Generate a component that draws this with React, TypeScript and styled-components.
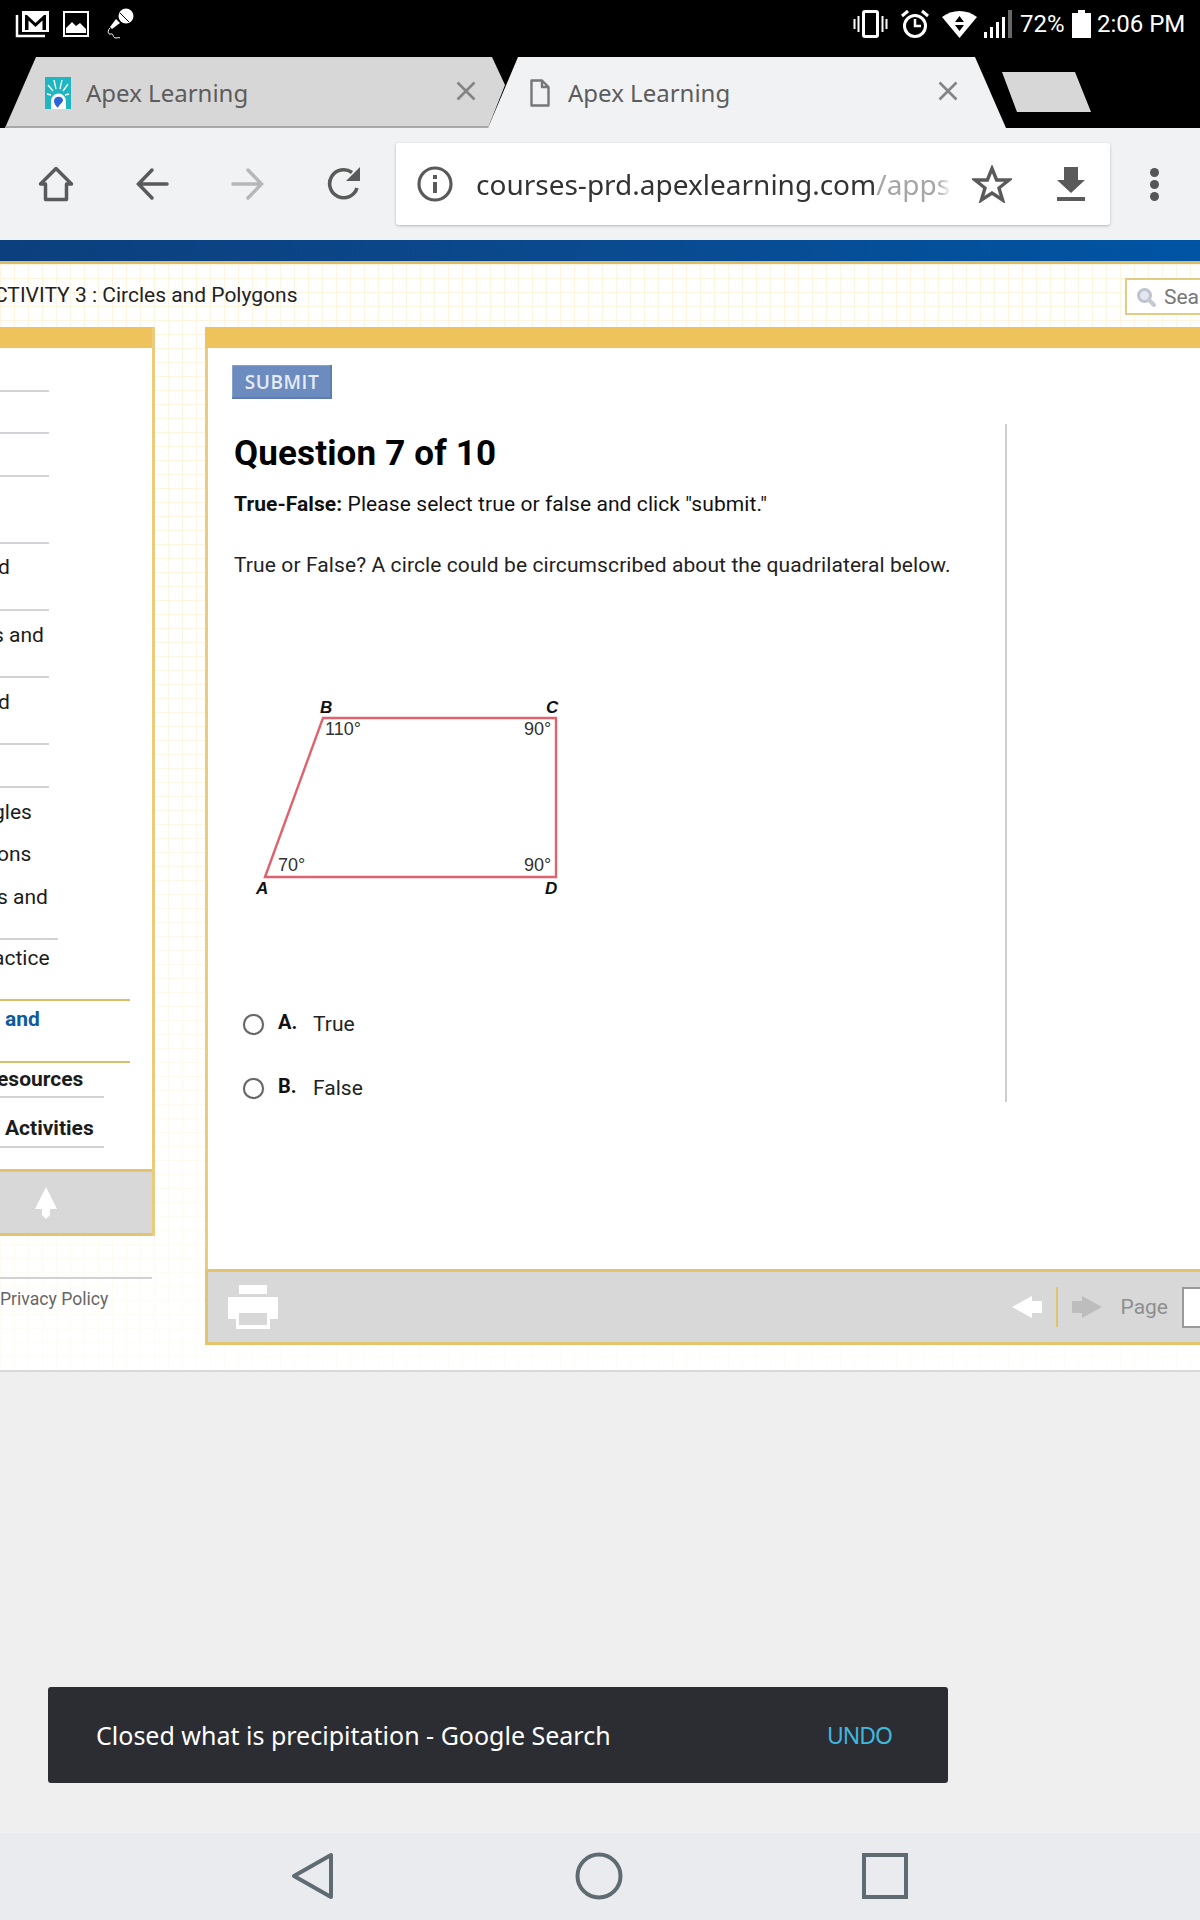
import React from 'react';
import styled, { createGlobalStyle } from 'styled-components';

const GlobalStyle = createGlobalStyle`
  html, body {
    margin: 0;
    padding: 0;
    width: 1200px;
    height: 1920px;
    overflow: hidden;
    background: #efefef;
  }
  * { box-sizing: border-box; }
`;

const Screen = styled.div`
  width: 1200px;
  height: 1920px;
  display: flex;
  flex-direction: column;
  overflow: hidden;
  font-family: Roboto, "Liberation Sans", sans-serif;
  color: #111;
`;

/* ---- phone status bar ---- */
const StatusBar = styled.div`
  height: 57px;
  background: #000;
  display: flex;
  align-items: center;
  padding: 0 13px 10px 15px;
  flex: none;
`;

const StatusLeft = styled.div`
  display: flex;
  align-items: center;
  gap: 13px;
`;

const StatusRight = styled.div`
  margin-left: auto;
  display: flex;
  align-items: center;
  gap: 8px;
  color: #fff;
`;

const StatusIcon = styled.svg<{ $ml?: number; $mr?: number }>`
  flex: none;
  margin-left: ${p => p.$ml ?? 0}px;
  margin-right: ${p => p.$mr ?? 0}px;
`;

const StatusText = styled.span<{ $w: number }>`
  width: ${p => p.$w}px;
  font-family: "Liberation Sans Narrow", Roboto, sans-serif;
  font-size: 24px;
  white-space: nowrap;
  line-height: 28px;
`;

/* ---- browser tabs ---- */
const TabStrip = styled.div`
  height: 71px;
  background: #000;
  display: flex;
  padding-left: 5px;
  flex: none;
`;

const Tab = styled.div<{ $active?: boolean }>`
  position: relative;
  height: 71px;
  width: ${p => (p.$active ? 518 : 500)}px;
  margin-left: ${p => (p.$active ? -17 : 0)}px;
  background: ${p => (p.$active ? '#f1f2f3' : '#d7d7d7')};
  clip-path: ${p =>
    p.$active
      ? 'polygon(30px 0, 487px 0, 518px 71px, 0 71px)'
      : 'polygon(31px 0, 487px 0, 500px 28px, 483px 71px, 0 71px)'};
  display: flex;
  align-items: center;
  padding: 0 ${p => (p.$active ? 48 : 29)}px 0 ${p => (p.$active ? 42 : 40)}px;
  ${p => (p.$active ? '' : 'box-shadow: inset 0 -2px 0 #a9a9a9;')}
`;

const TabIcon = styled.svg`
  flex: none;
`;

const TabTitle = styled.span<{ $active?: boolean }>`
  font-family: "Noto Sans", sans-serif;
  font-size: 24px;
  color: #5c5c5c;
  margin-left: ${p => (p.$active ? 18 : 15)}px;
  white-space: nowrap;
`;

const TabClose = styled.svg`
  margin: -4px 0 0 auto;
  flex: none;
`;

const NewTab = styled.div`
  width: 89px;
  height: 40px;
  margin: 15px 0 0 -4px;
  background: #d7d7d7;
  clip-path: polygon(0 0, 73px 0, 89px 40px, 15px 40px);
`;

/* ---- browser toolbar ---- */
const Toolbar = styled.div`
  height: 112px;
  background: #f1f2f3;
  display: flex;
  align-items: center;
  padding-left: 8px;
  flex: none;
`;

const ToolCell = styled.div`
  width: 96px;
  height: 48px;
  display: flex;
  align-items: center;
  justify-content: center;
  flex: none;
`;

const AddressBar = styled.div`
  width: 714px;
  height: 82px;
  margin-left: 4px;
  background: #fff;
  border-radius: 3px;
  box-shadow: 0 1px 3px rgba(0, 0, 0, 0.25);
  display: flex;
  align-items: center;
  padding-left: 21px;
  flex: none;
`;

const UrlText = styled.div`
  width: 476px;
  margin-left: 23px;
  overflow: hidden;
  white-space: nowrap;
  font-family: "Noto Sans", sans-serif;
  font-size: 28px;
  color: #333;
  -webkit-mask-image: linear-gradient(90deg, #000 97%, transparent 100%);
`;

const UrlPath = styled.span`
  color: #a6a6a6;
`;

const AddressIcon = styled.svg<{ $ml?: number }>`
  margin-left: ${p => p.$ml ?? 0}px;
  flex: none;
`;

const MenuDots = styled.div`
  width: 88px;
  display: flex;
  flex-direction: column;
  align-items: center;
  gap: 3px;
  flex: none;
`;

const Dot = styled.span`
  width: 9px;
  height: 9px;
  border-radius: 50%;
  background: #565656;
`;

/* ---- page ---- */
const BlueBand = styled.div`
  height: 24px;
  flex: none;
  background: linear-gradient(90deg, #0c3f7d 0%, #0a4a8f 50%, #0054a4 100%);
  border-bottom: 3px solid #dcbc62;
`;

const PageArea = styled.div`
  height: 1108px;
  flex: none;
  border-bottom: 2px solid #d9d9d9;
  background-color: #fff;
  background-image:
    linear-gradient(rgba(255, 255, 255, 0) 30%, rgba(255, 255, 255, 0.75) 100%),
    linear-gradient(#fdf5e0 1px, transparent 1px),
    linear-gradient(90deg, #fdf5e0 1px, transparent 1px);
  background-size: 100% 100%, 14px 14px, 14px 14px;
`;

const TopStrip = styled.div`
  height: 63px;
  display: flex;
  align-items: flex-start;
`;

const ActivityTitle = styled.div`
  font-size: 21px;
  line-height: 24px;
  margin: 19px 0 0 -6px;
  color: #222;
  white-space: nowrap;
`;

const SearchBox = styled.div`
  margin: 14px 0 0 auto;
  width: 75px;
  height: 37px;
  flex: none;
  background: #fff;
  border: 2px solid #e3cb85;
  border-right: 0;
  display: flex;
  align-items: center;
  padding-left: 9px;
  gap: 8px;
  font-size: 21px;
  color: #777;
`;

const SearchIcon = styled.svg`
  flex: none;
`;

const Panels = styled.div`
  display: flex;
  gap: 50px;
  align-items: flex-start;
`;

const LeftColumn = styled.div`
  width: 155px;
  flex: none;
`;

const SidePanel = styled.div`
  height: 909px;
  background: #fff;
  border-right: 3px solid #eccb7c;
  display: flex;
  flex-direction: column;
  overflow: hidden;
`;

const PanelHeader = styled.div`
  height: 21px;
  flex: none;
  background: #efc35b;
`;

const NavRow = styled.div<{ $h: number; $pad: number; $indent?: number }>`
  height: ${p => p.$h}px;
  padding-top: ${p => p.$pad}px;
  margin-left: ${p => p.$indent ?? 0}px;
  display: flex;
  flex-direction: column;
  flex: none;
`;

const NavText = styled.div<{ $kind?: 'bold' | 'current'; $lead?: number }>`
  font-size: 21px;
  line-height: 24px;
  padding-left: ${p => p.$lead ?? 0}px;
  white-space: nowrap;
  font-weight: ${p => (p.$kind ? 700 : 400)};
  color: ${p => (p.$kind === 'current' ? '#0f5a9c' : '#1c1c1c')};
`;

const NavRule = styled.div<{ $w: number; $gold?: boolean }>`
  width: ${p => p.$w}px;
  height: 2px;
  margin-top: auto;
  background: ${p => (p.$gold ? '#dfbd68' : '#d2d3d6')};
`;

const SideFooter = styled.div`
  margin-top: auto;
  height: 67px;
  flex: none;
  background: #d8d8d8;
  border-top: 3px solid #e3c36c;
  border-bottom: 3px solid #e3c36c;
  display: flex;
  align-items: center;
  padding-left: 35px;
`;

const FooterLinks = styled.div`
  margin-top: 41px;
  border-top: 2px solid #d2d2d2;
  width: 152px;
  padding-top: 8px;
  font-size: 17.6px;
  line-height: 24px;
  color: #666;
  white-space: nowrap;
`;

const MainPanel = styled.div`
  width: 1100px;
  flex: none;
  background: #fff;
  border-left: 3px solid #eccb7c;
`;

const MainHeader = styled(PanelHeader)`
  margin-left: -3px;
`;

const MainBody = styled.div`
  height: 921px;
  padding: 17px 0 0 24px;
`;

const SubmitButton = styled.div`
  width: 100px;
  height: 34px;
  background: #6c8bbf;
  box-shadow: inset -2px -2px 0 #5d7db3, inset 1px 1px 0 #88a2cc;
  color: #e6ecf6;
  font-family: "Open Sans", sans-serif;
  font-size: 19px;
  font-weight: 600;
  letter-spacing: 0.6px;
  display: flex;
  align-items: center;
  justify-content: center;
`;

const QuestionColumn = styled.div`
  width: 775px;
  height: 678px;
  margin-top: 25px;
  padding-left: 2px;
  border-right: 2px solid #cfcfcf;
`;

const Heading = styled.h1`
  margin: 2px 0 0;
  font-size: 35px;
  letter-spacing: 0.15px;
  line-height: 60px;
  font-weight: 700;
  color: #000;
`;

const Instruction = styled.p`
  margin: 5px 0 0;
  font-size: 21px;
  letter-spacing: 0.08px;
  line-height: 30px;
  color: #111;
`;

const Prompt = styled.p`
  margin: 31px 0 0;
  font-size: 21px;
  letter-spacing: 0.1px;
  line-height: 30px;
  color: #222;
`;

const Figure = styled.svg`
  display: block;
  margin: 110px 0 0 16px;
`;

const Options = styled.div`
  margin-top: 94px;
  display: flex;
  flex-direction: column;
  gap: 24px;
`;

const OptionRow = styled.div`
  height: 40px;
  display: flex;
  align-items: center;
  padding-left: 9px;
`;

const Radio = styled.span`
  width: 21px;
  height: 21px;
  border-radius: 50%;
  border: 2px solid #666;
  background: #fff;
  box-shadow: 0 0 1px #999;
  flex: none;
`;

const OptionKey = styled.span`
  width: 35px;
  margin-left: 14px;
  font-size: 20px;
  font-weight: 700;
  color: #111;
  margin-top: -4px;
`;

const OptionText = styled.span`
  font-size: 21px;
  color: #222;
`;

const MainFooter = styled.div`
  height: 76px;
  margin-left: -3px;
  background: #d8d8d8;
  border-top: 3px solid #e3c36c;
  border-bottom: 3px solid #e3c36c;
  border-left: 3px solid #e3c36c;
  display: flex;
  align-items: center;
  padding-left: 20px;
`;

const Pager = styled.div`
  margin-left: auto;
  display: flex;
  align-items: center;
`;

const PagerDivider = styled.span`
  width: 2px;
  height: 40px;
  margin: 0 14px;
  background: #e3c36c;
`;

const PagerLabel = styled.span`
  margin: 0 14px 0 19px;
  font-size: 21px;
  color: #8f8f8f;
`;

const PageInput = styled.div`
  width: 123px;
  height: 41px;
  background: #fff;
  border: 2px solid #999;
`;

/* ---- lower area of the browser ---- */
const LowerArea = styled.div`
  flex: 1;
  background: #efefef;
  padding: 315px 0 0 48px;
`;

const Snackbar = styled.div`
  width: 900px;
  height: 96px;
  background: #2b2d33;
  border-radius: 3px;
  display: flex;
  align-items: center;
  padding: 0 56px 0 48px;
  font-family: "Noto Sans", sans-serif;
  font-size: 25px;
  color: #fff;
`;

const SnackbarText = styled.span`
  white-space: nowrap;
`;

const UndoLabel = styled.span`
  margin-left: auto;
  font-size: 23px;
  letter-spacing: -1px;
  color: #3fb8de;
`;

const NavBar = styled.div`
  height: 87px;
  flex: none;
  background: #e9ebee;
  display: grid;
  grid-template-columns: repeat(3, 286px);
  padding: 0 0 2px 170px;
  align-items: center;
  justify-items: center;
`;

const App: React.FC = () => {
  const rows: Array<{
    h: number;
    pad: number;
    text?: string;
    kind?: 'bold' | 'current';
    rule?: number;
    gold?: boolean;
    indent?: number;
    lead?: number;
  }> = [
    { h: 44, pad: 0, rule: 49 },
    { h: 42, pad: 0, rule: 49 },
    { h: 43, pad: 0, rule: 49 },
    { h: 67, pad: 0, rule: 49 },
    { h: 67, pad: 11, text: 'd', rule: 49, indent: -2 },
    { h: 67, pad: 12, text: 's and', rule: 49, indent: -7 },
    { h: 67, pad: 12, text: 'd', rule: 49, indent: -2 },
    { h: 43, pad: 0, rule: 49 },
    { h: 42, pad: 12, text: 'gles', indent: -7 },
    { h: 42, pad: 12, text: 'ons', indent: -3 },
    { h: 68, pad: 13, text: 's and', rule: 58, indent: -3 },
    { h: 61, pad: 6, text: 'actice', rule: 130, gold: true, indent: -7 },
    { h: 62, pad: 6, text: 'and', kind: 'current', rule: 130, gold: true, lead: 5 },
    { h: 35, pad: 4, text: 'esources', kind: 'bold', rule: 104, indent: -3 },
    { h: 50, pad: 18, text: 'Activities', kind: 'bold', rule: 104, lead: 5 },
  ];

  return (
    <Screen>
      <GlobalStyle />

      <StatusBar>
        <StatusLeft>
          <svg width="35" height="28" viewBox="0 0 35 28">
            <path d="M2 5V26H30" fill="none" stroke="#fff" strokeWidth="2.5" />
            <rect x="7" y="1" width="27" height="21" fill="#fff" />
            <path d="M10 20V5H12L20.5 13L29 5H31V20H27.5V10.5L20.5 17L13.5 10.5V20Z" fill="#000" />
          </svg>
          <svg width="26" height="26" viewBox="0 0 26 26">
            <rect x="1" y="1" width="24" height="24" fill="none" stroke="#fff" strokeWidth="2" />
            <path d="M3 22V17L9 11L13 15L17 12L23 18V22Z" fill="#fff" />
          </svg>
          <StatusIcon $ml={5} width="28" height="32" viewBox="0 0 28 32">
            <path d="M13 15L9 11L3 19L5 21Z" fill="#fff" />
            <circle cx="19" cy="8" r="7.5" fill="#fff" />
            <path d="M13 5L22 14" stroke="#000" strokeWidth="1" />
            <path d="M3 20C0 23 1 27 4 26C7 25 5 30 9 30C11 30 11 29 13 30" fill="none" stroke="#fff" strokeWidth="1" />
          </StatusIcon>
        </StatusLeft>
        <StatusRight>
          <StatusIcon width="35" height="28" viewBox="0 0 35 28">
            <rect x="10.5" y="1.5" width="14" height="25" rx="1.5" fill="none" stroke="#fff" strokeWidth="3" />
            <path d="M1.5 9V19M5.5 6V22M29.5 6V22M33.5 9V19" stroke="#fff" strokeWidth="2" />
          </StatusIcon>
          <StatusIcon $ml={4} width="30" height="30" viewBox="0 0 30 30">
            <circle cx="15" cy="17" r="10.5" fill="none" stroke="#fff" strokeWidth="3" />
            <path d="M15 10V17H21" fill="none" stroke="#fff" strokeWidth="2.5" />
            <path d="M2 7L8 2M28 7L22 2" stroke="#fff" strokeWidth="3" />
          </StatusIcon>
          <StatusIcon $ml={4} width="35" height="28" viewBox="0 0 35 28">
            <path d="M0 7C10 -1 25 -1 35 7L17.5 28Z" fill="#fff" />
            <path d="M17.5 6L13 12H22ZM17.5 21L13 15H22Z" fill="#000" />
          </StatusIcon>
          <StatusIcon $ml={-1} width="28" height="28" viewBox="0 0 28 28">
            <path d="M0 22h3v6H0zM6 17h3v11H6zM12 12h3v16h-3zM18 7h3v21h-3z" fill="#fff" />
            <path d="M24 0h4v28h-4z" fill="#666" />
          </StatusIcon>
          <StatusText $w={42}>72%</StatusText>
          <StatusIcon $ml={2} $mr={-2} width="19" height="28" viewBox="0 0 19 28">
            <path d="M6 0h7v3h6v25H0V3h6z" fill="#fff" />
          </StatusIcon>
          <StatusText $w={90}>2:06 PM</StatusText>
        </StatusRight>
      </StatusBar>

      <TabStrip>
        <Tab>
          <TabIcon width="26" height="32" viewBox="0 0 26 32">
            <rect width="26" height="32" fill="#1eb6c1" />
            <path d="M3 8L8 14M9 3L11 12M17 3L15 12M23 7L18 14M2 17L6 18M24 17L20 18" stroke="#fff" strokeWidth="1.3" />
            <path d="M6 32V24A7.5 7.5 0 0 1 21 24V32Z" fill="#fff" />
            <path d="M9 24A4.6 4.6 0 0 1 18 23C18 26 14 27 13 31C11 29 9 27 9 24Z" fill="#2b63d8" />
          </TabIcon>
          <TabTitle>Apex Learning</TabTitle>
          <TabClose width="20" height="20" viewBox="0 0 20 20">
            <path d="M1.5 1.5L18.5 18.5M18.5 1.5L1.5 18.5" stroke="#848484" strokeWidth="2.6" />
          </TabClose>
        </Tab>
        <Tab $active>
          <TabIcon width="20" height="28" viewBox="0 0 20 28">
            <path d="M1.5 1.5H12L18.5 8V26.5H1.5Z M12 1.5V8H18.5" fill="none" stroke="#777" strokeWidth="2.4" strokeLinejoin="round" />
          </TabIcon>
          <TabTitle $active>Apex Learning</TabTitle>
          <TabClose width="20" height="20" viewBox="0 0 20 20">
            <path d="M1.5 1.5L18.5 18.5M18.5 1.5L1.5 18.5" stroke="#848484" strokeWidth="2.6" />
          </TabClose>
        </Tab>
        <NewTab />
      </TabStrip>

      <Toolbar>
        <ToolCell>
          <svg width="36" height="36" viewBox="0 0 36 36">
            <path d="M18 2.5L33.5 18H28.5V33.5H7.5V18H2.5Z" fill="none" stroke="#5a5a5a" strokeWidth="3.5" strokeLinejoin="round" />
          </svg>
        </ToolCell>
        <ToolCell>
          <svg width="34" height="34" viewBox="0 0 34 34">
            <path d="M32 17H4M17 3L3.5 17L17 31" fill="none" stroke="#5a5a5a" strokeWidth="3.5" strokeLinecap="round" />
          </svg>
        </ToolCell>
        <ToolCell>
          <svg width="34" height="34" viewBox="0 0 34 34">
            <path d="M2 17H30M17 3L30.5 17L17 31" fill="none" stroke="#b7b7b7" strokeWidth="3.5" strokeLinecap="round" />
          </svg>
        </ToolCell>
        <ToolCell>
          <svg width="34" height="34" viewBox="0 0 34 34">
            <path d="M30 21A14 14 0 1 1 25 5.5" fill="none" stroke="#5a5a5a" strokeWidth="3.6" />
            <path d="M19 14H33V0Z" fill="#5a5a5a" />
          </svg>
        </ToolCell>
        <AddressBar>
          <AddressIcon width="36" height="36" viewBox="0 0 36 36">
            <circle cx="18" cy="18" r="16" fill="none" stroke="#5a5a5a" strokeWidth="3.2" />
            <rect x="16" y="9" width="4" height="4" fill="#5a5a5a" />
            <rect x="16" y="16" width="4" height="11" fill="#5a5a5a" />
          </AddressIcon>
          <UrlText>
            courses-prd.apexlearning.com<UrlPath>/apps</UrlPath>
          </UrlText>
          <AddressIcon $ml={20} width="40" height="38" viewBox="0 0 40 38">
            <path d="M20 3.5L24.6 15H37L27 23L30.6 35L20 28L9.4 35L13 23L3 15H15.4Z" fill="none" stroke="#5a5a5a" strokeWidth="3.4" strokeLinejoin="miter" />
          </AddressIcon>
          <AddressIcon $ml={45} width="28" height="34" viewBox="0 0 28 34">
            <path d="M7 0H21V13H28L14 26L0 13H7Z" fill="#5a5a5a" />
            <rect y="30" width="28" height="4" fill="#5a5a5a" />
          </AddressIcon>
        </AddressBar>
        <MenuDots>
          <Dot />
          <Dot />
          <Dot />
        </MenuDots>
      </Toolbar>

      <BlueBand />

      <PageArea>
        <TopStrip>
          <ActivityTitle>CTIVITY 3 : Circles and Polygons</ActivityTitle>
          <SearchBox>
            <SearchIcon width="20" height="20" viewBox="0 0 20 20">
              <circle cx="8.5" cy="8.5" r="6" fill="#e4e8ee" stroke="#bcc4ce" strokeWidth="3" />
              <path d="M13 13L18 18" stroke="#c4cad2" strokeWidth="4" strokeLinecap="round" />
            </SearchIcon>
            Sea
          </SearchBox>
        </TopStrip>

        <Panels>
          <LeftColumn>
            <SidePanel>
              <PanelHeader />
              {rows.map((row, i) => (
                <NavRow key={i} $h={row.h} $pad={row.pad} $indent={row.indent}>
                  {row.text && (
                    <NavText $kind={row.kind} $lead={row.lead}>
                      {row.text}
                    </NavText>
                  )}
                  {row.rule && <NavRule $w={row.rule - (row.indent ?? 0)} $gold={row.gold} />}
                </NavRow>
              ))}
              <SideFooter>
                <svg width="22" height="32" viewBox="0 0 22 32">
                  <path d="M11 0L22 22H15V28L11 32L7 28V22H0Z" fill="#fff" />
                </svg>
              </SideFooter>
            </SidePanel>
            <FooterLinks>Privacy Policy</FooterLinks>
          </LeftColumn>

          <MainPanel>
            <MainHeader />
            <MainBody>
              <SubmitButton>SUBMIT</SubmitButton>
              <QuestionColumn>
                <Heading>Question 7 of 10</Heading>
                <Instruction>
                  <b>True-False:</b> Please select true or false and click "submit."
                </Instruction>
                <Prompt>True or False? A circle could be circumscribed about the quadrilateral below.</Prompt>
                <Figure width="330" height="220" viewBox="0 0 330 220">
                  <path d="M15 187L73 28H306V187Z" fill="none" stroke="#e0626c" strokeWidth="2.4" />
                  <g fontFamily='"Liberation Sans", sans-serif' fontSize="18" fill="#333">
                    <text x="75" y="45">110°</text>
                    <text x="274" y="45">90°</text>
                    <text x="28" y="181">70°</text>
                    <text x="274" y="181">90°</text>
                  </g>
                  <g fontFamily='"Liberation Sans", sans-serif' fontSize="17" fontWeight="700" fontStyle="italic" fill="#111">
                    <text x="70" y="23">B</text>
                    <text x="296" y="23">C</text>
                    <text x="6" y="204">A</text>
                    <text x="295" y="204">D</text>
                  </g>
                </Figure>
                <Options>
                  <OptionRow>
                    <Radio />
                    <OptionKey>A.</OptionKey>
                    <OptionText>True</OptionText>
                  </OptionRow>
                  <OptionRow>
                    <Radio />
                    <OptionKey>B.</OptionKey>
                    <OptionText>False</OptionText>
                  </OptionRow>
                </Options>
              </QuestionColumn>
            </MainBody>
            <MainFooter>
              <svg width="50" height="44" viewBox="0 0 50 44">
                <rect x="11" y="0" width="28" height="9" fill="#fff" />
                <path d="M0 12H50V34H42V44H8V34H0Z" fill="#fff" />
                <rect x="11" y="28" width="28" height="12" fill="#d8d8d8" />
              </svg>
              <Pager>
                <svg width="30" height="22" viewBox="0 0 30 22">
                  <path d="M0 11L20 0V5H30V17H20V22Z" fill="#fff" />
                </svg>
                <PagerDivider />
                <svg width="30" height="22" viewBox="0 0 30 22">
                  <path d="M30 11L10 0V5H0V17H10V22Z" fill="#bdbdbd" />
                </svg>
                <PagerLabel>Page</PagerLabel>
                <PageInput />
              </Pager>
            </MainFooter>
          </MainPanel>
        </Panels>
      </PageArea>

      <LowerArea>
        <Snackbar>
          <SnackbarText>Closed what is precipitation - Google Search</SnackbarText>
          <UndoLabel>UNDO</UndoLabel>
        </Snackbar>
      </LowerArea>

      <NavBar>
        <svg width="44" height="48" viewBox="0 0 44 48">
          <path d="M40 3V45L3 24Z" fill="none" stroke="#5f6b72" strokeWidth="4" strokeLinejoin="round" />
        </svg>
        <svg width="48" height="48" viewBox="0 0 48 48">
          <circle cx="24" cy="24" r="21.5" fill="none" stroke="#5f6b72" strokeWidth="4" />
        </svg>
        <svg width="46" height="46" viewBox="0 0 46 46">
          <rect x="2" y="2" width="42" height="42" fill="none" stroke="#5f6b72" strokeWidth="4" />
        </svg>
      </NavBar>
    </Screen>
  );
};

export default App;
